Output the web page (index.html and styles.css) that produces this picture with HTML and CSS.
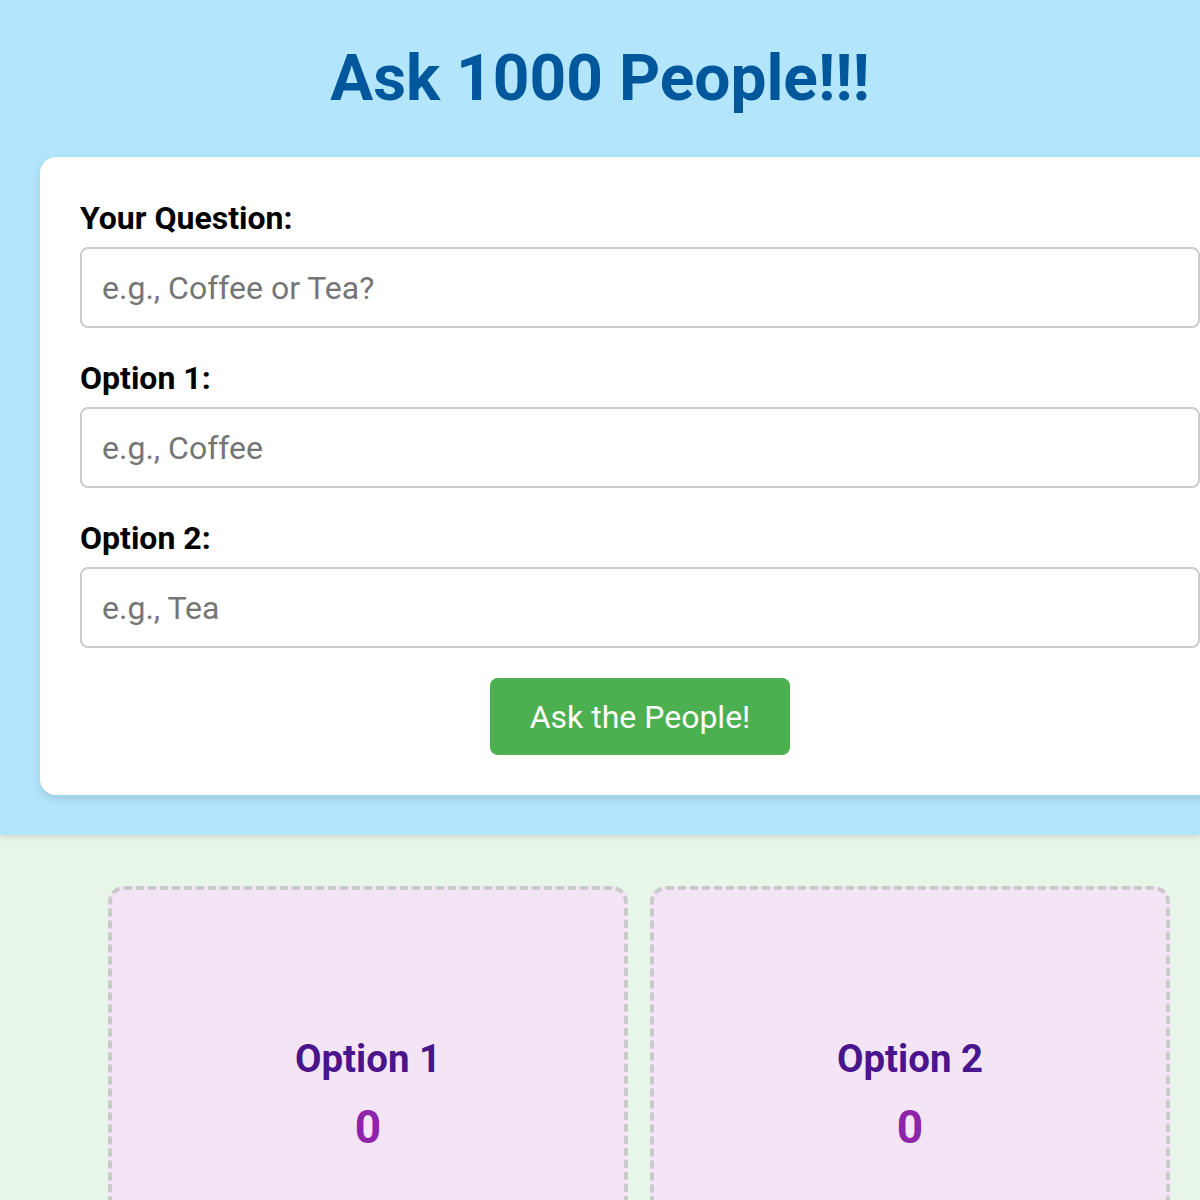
FILE: index.html
```html
<!DOCTYPE html>
<html lang="en">
<head>
<meta charset="utf-8">
<title>Ask 1000 People!!!</title>
<link rel="stylesheet" href="styles.css">
</head>
<body>
  <header class="top">
    <h1 class="title">Ask 1000 People!!!</h1>
    <form class="card">
      <label class="label" for="q">Your Question:</label>
      <input class="field" id="q" type="text" placeholder="e.g., Coffee or Tea?">
      <label class="label" for="o1">Option 1:</label>
      <input class="field" id="o1" type="text" placeholder="e.g., Coffee">
      <label class="label" for="o2">Option 2:</label>
      <input class="field" id="o2" type="text" placeholder="e.g., Tea">
      <div class="actions">
        <button class="ask" type="button">Ask the People!</button>
      </div>
    </form>
  </header>
  <main class="results">
    <section class="box">
      <h3 class="box-title">Option 1</h3>
      <div class="count">0</div>
    </section>
    <section class="box">
      <h3 class="box-title">Option 2</h3>
      <div class="count">0</div>
    </section>
  </main>
</body>
</html>
```
FILE: styles.css
```css
html, body {
  margin: 0;
  padding: 0;
}
body {
  font-family: Roboto, "Liberation Sans", Arial, sans-serif;
  background: #e8f5e9;
  overflow-x: hidden;
}
.top {
  position: relative;
  z-index: 1;
  background: #b3e5fc;
  padding: 41px 40px 40px;
  overflow: hidden;
  box-shadow: 0 2px 6px rgba(0, 0, 0, 0.12);
}
.title {
  margin: 0 0 41px;
  text-align: center;
  font-size: 64px;
  font-weight: 700;
  line-height: 75px;
  color: #01579b;
}
.card {
  display: block;
  width: 100%;
  padding: 42px 40px 40px;
  background: #fff;
  border-radius: 16px;
  box-shadow: 0 4px 10px rgba(0, 0, 0, 0.12);
}
.label {
  display: block;
  font-size: 32px;
  font-weight: 700;
  line-height: 38px;
  color: #000;
  margin: 0 0 10px;
}
.field {
  display: block;
  box-sizing: border-box;
  width: 100%;
  height: 81px;
  margin: 0 0 31px;
  padding: 0 20px;
  border: 2px solid #ccc;
  border-radius: 8px;
  font-family: inherit;
  font-size: 32px;
  color: #222;
  background: #fff;
}
.field::placeholder {
  color: #757575;
}
.actions {
  display: flex;
  justify-content: center;
  margin-top: -1px;
}
.ask {
  width: 300px;
  height: 77px;
  border: 0;
  border-radius: 8px;
  background: #4caf50;
  color: #fff;
  font-family: inherit;
  font-size: 32px;
  font-weight: 400;
}
.results {
  display: flex;
  gap: 22px;
  padding: 51px 30px 0 108px;
}
.box {
  flex: 1;
  height: 400px;
  box-sizing: border-box;
  padding-top: 146px;
  background: #f3e5f5;
  border: 4px dashed #cacaca;
  border-radius: 16px;
  text-align: center;
}
.box-title {
  margin: 0;
  font-size: 38.4px;
  font-weight: 700;
  line-height: 45px;
  color: #4a148c;
}
.count {
  margin-top: 19px;
  font-size: 46px;
  font-weight: 700;
  line-height: 54px;
  color: #8e24aa;
}
```
